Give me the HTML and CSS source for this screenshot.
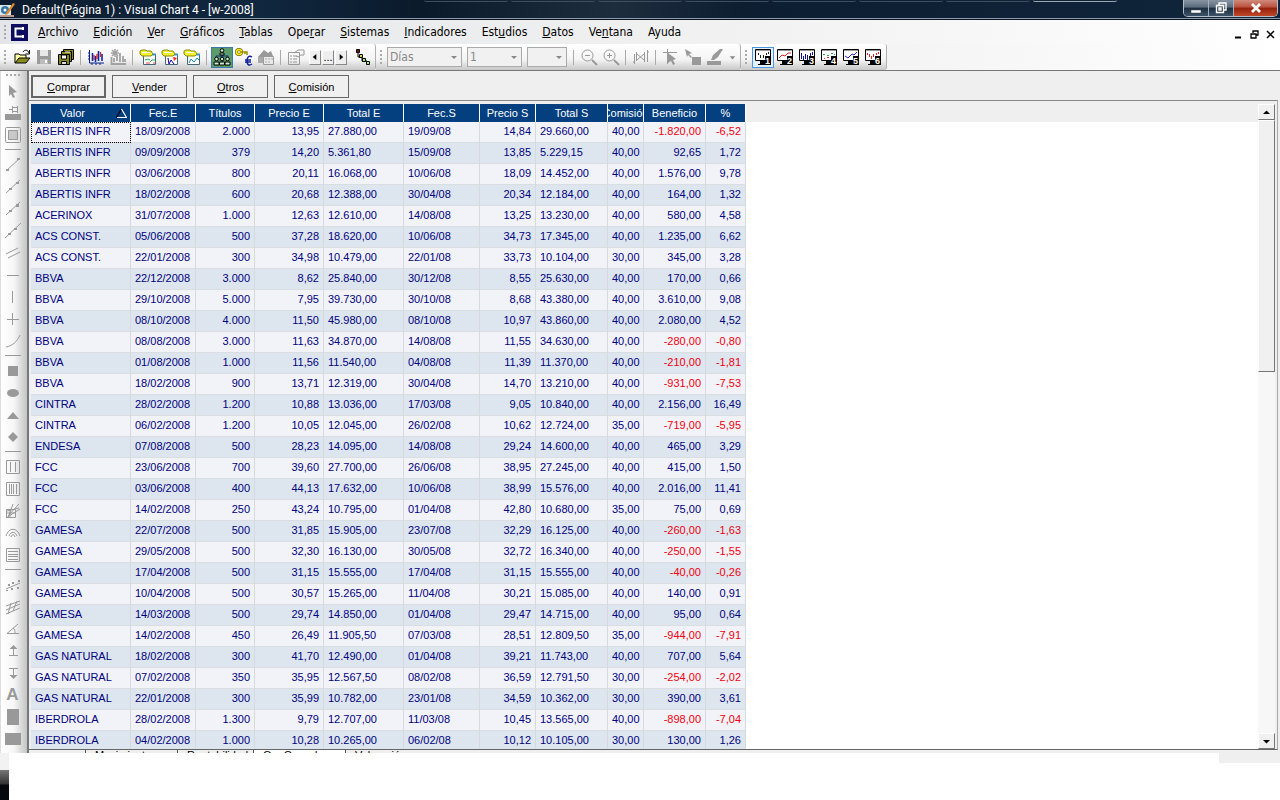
FILE: index.html
```html
<!DOCTYPE html>
<html lang="es">
  <head>
    <meta charset="utf-8" />
    <title>Default(Página 1) : Visual Chart 4 - [w-2008]</title>
    <link rel="stylesheet" href="styles.css">
  </head>

  <body>
    <!-- iconos compartidos -->
    <svg class="defs" aria-hidden="true">
      <symbol id="monitor" viewBox="0 0 18 18">
        <path d="M1.500 1.500h15v11h-15z" fill="#fff" stroke="#000"/>
        <path d="M2 2.500h14" stroke="#999"/>
        <path d="M6 13h5v2h1v2H4v-1h2z" fill="#000"/>
        <path d="M11 8h6v9h-6z" fill="#000"/>
      </symbol>
      <symbol id="folder" viewBox="0 0 18 18">
        <path d="M4.500 6.500h12v10h-12z" fill="#fff" stroke="#467" />
        <path d="M5 6.500h12" stroke="#39c" stroke-width="2"/>
        <path d="M1 3l2-1h4l1 1h4l2 3-2 2H3L1 6z" fill="#f4f02c" stroke="#8a8a10"/>
        <path d="M3 4.500h8" stroke="#fff"/>
      </symbol>
    </svg>

    <div class="window">
      <!-- barra de título -->
      <header class="titlebar">
        <div class="back-tabs"><i></i><i></i><i></i><i></i><i></i><i></i><i></i><i class="lit"></i></div>
        <svg class="app-icon" width="16" height="16" viewBox="0 0 16 16"><path d="M0 3h11v10H0z" fill="#dde8ee"/><circle cx="5" cy="8" r="4" fill="#3478a8"/><circle cx="5" cy="8" r="1.5" fill="#fff"/><path d="M6 11l7-10 2 1-7 10-3 1z" fill="#e08a28"/><path d="M0 14h14" stroke="#b98" stroke-width="2"/></svg>
        <h1>Default(Página 1) : Visual Chart 4 - [w-2008]</h1>
        <div class="win-buttons">
          <button aria-label="Minimizar"><svg width="12" height="12" viewBox="0 0 12 12"><path d="M1 8h10v3H1z" fill="#fff" stroke="#444" stroke-width=".5"/></svg></button>
          <button aria-label="Restaurar"><svg width="12" height="12" viewBox="0 0 12 12" fill="none" stroke="#fff" stroke-width="1.4"><path d="M4 3V1h7v7H9M1.500 3.500h7v7h-7zM4 6h2v2H4z"/></svg></button>
          <button class="close" aria-label="Cerrar"><svg width="12" height="12" viewBox="0 0 12 12"><path d="M2 2l8 8M10 2l-8 8" stroke="#fff" stroke-width="2.800"/></svg></button>
        </div>
      </header>

      <!-- menú -->
      <nav class="menubar">
        <span class="grip"></span>
        <svg class="doc-icon" width="17" height="17" viewBox="0 0 17 17"><path d="M0 0h17v17H0z" fill="#0c0c60"/><path d="M13 4.500H4.500v8H13" fill="none" stroke="#fff" stroke-width="2"/><path d="M12 3v3M12 11v3" stroke="#fff" stroke-width="2"/></svg>
        <a href="#"><u>A</u>rchivo</a>
        <a href="#"><u>E</u>dición</a>
        <a href="#"><u>V</u>er</a>
        <a href="#"><u>G</u>ráficos</a>
        <a href="#"><u>T</u>ablas</a>
        <a href="#">Ope<u>r</u>ar</a>
        <a href="#"><u>S</u>istemas</a>
        <a href="#"><u>I</u>ndicadores</a>
        <a href="#">Est<u>u</u>dios</a>
        <a href="#"><u>D</u>atos</a>
        <a href="#">Ve<u>n</u>tana</a>
        <a href="#">Ayuda</a>
        <div class="doc-buttons">
          <button aria-label="Minimizar ventana"><svg width="9" height="9" viewBox="0 0 9 9"><path d="M1 7.500h6" stroke="#000" stroke-width="2"/></svg></button>
          <button aria-label="Restaurar ventana"><svg width="9" height="9" viewBox="0 0 9 9"><path d="M3 3V1h5v4H6M1 4h5v4H1zM3 1h5M1 4h5" fill="none" stroke="#000" stroke-width="1.300"/></svg></button>
          <button aria-label="Cerrar ventana"><svg width="9" height="9" viewBox="0 0 9 9"><path d="M1 1l7 7M8 1L1 8" stroke="#000" stroke-width="1.500"/></svg></button>
        </div>
      </nav>

      <!-- barras de herramientas -->
      <div class="toolbars">
        <div class="toolbar">
          <span class="grip"></span>
          <button aria-label="Abrir"><svg viewBox="0 0 18 18"><path d="M2 15V6h4l1 1h6v3" fill="#ffffa0" stroke="#000"/><path d="M2 15l4-5h11l-4 5z" fill="#8a8a20" stroke="#000"/><path d="M10 4c2-3 5-2 6 1M16.500 2v4h-4" fill="none" stroke="#000"/></svg></button>
          <button aria-label="Guardar"><svg viewBox="0 0 18 18"><path d="M2 2h14v14H2z" fill="#9a9a9a"/><path d="M5 2h8v6H5z" fill="#e8e8e8"/><path d="M5 11h8v5H5z" fill="#bbb"/><path d="M10 12h2v3h-2z" fill="#fff"/></svg></button>
          <button aria-label="Guardar todo"><svg viewBox="0 0 18 18" stroke="#000"><path d="M6.500 1.500h10v10h-10z" fill="#8a8a20"/><path d="M4.500 3.500h10v10h-10z" fill="#8a8a20"/><path d="M8 4h5" stroke="#fff"/><path d="M1.500 6.500h11v10h-11z" fill="#8a8a20"/><path d="M4.500 7h5v4h-5z" fill="#fff"/><path d="M4.500 13.500h5v3h-5z" fill="#ddd"/></svg></button>
          <span class="sep"></span>
          <button aria-label="Gráfico"><svg viewBox="0 0 18 18" fill="none"><path d="M2.500 2v13H17M1 5h2M1 8h2M1 11h2M5 15v2M9 15v2M13 15v2" stroke="#002090"/><path d="M5.500 5v8M8.500 8v6M11.500 3v10M15 6v7" stroke="#0828b0" stroke-width="1.600"/><path d="M7 7v5M10 6v5M13.500 4v5" stroke="#d03030" stroke-width="1.400"/></svg></button>
          <button aria-label="Quitar gráfico"><svg viewBox="0 0 18 18" fill="none" stroke="#a2a2a2"><path d="M2.500 9v7H17M8 13V8M11 14V5M14 14V8M16 14v-3M5 14v-4" stroke-width="1.800"/><path d="M3 2l6 6M9 2L3 8M6 1v8M2 5h8" stroke-width="1.500"/></svg></button>
          <span class="sep"></span>
          <button aria-label="Abrir tabla"><svg viewBox="0 0 18 18"><use href="#folder"/><path d="M6 12l3-1 2 1" stroke="#2a4" fill="none"/><path d="M11 14l2-2h3" stroke="#2a4" fill="none"/><path d="M7 15h4M14 15h2" stroke="#e44"/></svg></button>
          <button aria-label="Abrir cursor"><svg viewBox="0 0 18 18"><use href="#folder"/><path d="M7 10l1 6 2-4 3 4" stroke="#109" fill="none"/><path d="M12 9l4 1-3 3z" fill="#e22"/></svg></button>
          <button aria-label="Abrir gráfico"><svg viewBox="0 0 18 18"><use href="#folder"/><path d="M6 15l2-4 3 3 3-4 2 2" stroke="#18c" fill="none"/></svg></button>
          <span class="sep"></span>
          <button class="pressed" aria-label="Cartera"><svg viewBox="0 0 18 18" fill="#cdeccc" stroke="#000"><path d="M9 6v8M3 10V8h12v2" fill="none" stroke="#0a2a80"/><circle cx="9" cy="2.500" r="1.800"/><path d="M7 7V5h4v2z"/><circle cx="3.500" cy="11" r="1.800"/><circle cx="9" cy="11" r="1.800"/><circle cx="14.500" cy="11" r="1.800"/><path d="M1 17v-3h5v3zM6.500 17v-3h5v3zM12 17v-3h5v3z"/></svg></button>
          <button aria-label="Clave euro"><svg viewBox="0 0 18 18"><circle cx="4" cy="4" r="2.500" fill="none" stroke="#776a00" stroke-width="3"/><circle cx="4" cy="4" r="2.500" fill="none" stroke="#f4ea20" stroke-width="1.500"/><path d="M6 4h6v3M10 4v2" fill="none" stroke="#a09000" stroke-width="1.600"/><path d="M17 9c-3-2-5 0-5 4s2 5 5 3M10 12h6M10 14h6" fill="none" stroke="#102098" stroke-width="1.500"/></svg></button>
          <button aria-label="Inicio"><svg viewBox="0 0 18 18"><path d="M1 9l6-7 4 3 3-2 2 5v1z" fill="#999"/><path d="M1 9h6v6H1z" fill="#aaa"/><path d="M6.500 8.500h10v8h-10z" fill="#e9e9e9" stroke="#999"/><path d="M8 11h2M11 11h2M14 11h2M8 14h2M11 14h2" stroke="#aaa"/></svg></button>
          <span class="sep"></span>
          <button aria-label="Propiedades"><svg viewBox="0 0 18 18" fill="none" stroke="#999"><path d="M1.500 4.500h11v12h-11z"/><path d="M3 8h2M6 8h4M3 11h2M6 11h4M3 14h2M6 14h4M7 5l4-3h6v5h-3l-3 2-2-1"/></svg></button>
          <div class="stepper">
            <button aria-label="Anterior"><svg viewBox="0 0 9 9"><path d="M6 1v7L2 4.500z"/></svg></button>
            <button>...</button>
            <button aria-label="Siguiente"><svg viewBox="0 0 9 9"><path d="M3 1v7l4-3.500z"/></svg></button>
          </div>
          <button aria-label="Nodos"><svg viewBox="0 0 18 18" stroke="#000"><path d="M5 4v5h4v4h5" fill="none"/><path d="M3.500 1.500h3v3h-3z" fill="#801010"/><path d="M6.500 6.500h3v3h-3z" fill="#dd2"/><path d="M9.500 10.500h3v3h-3z" fill="#9e7"/><path d="M13.500 13.500h3v3h-3z" fill="#9e7"/></svg></button>
        </div>

        <div class="toolbar">
          <span class="grip"></span>
          <label class="combo period"><select aria-label="Periodo" disabled><option>Días</option></select></label>
          <label class="combo amount"><select aria-label="Compresión" disabled><option>1</option></select></label>
          <label class="combo extra"><select aria-label="Plantilla" disabled><option></option></select></label>
          <span class="sep"></span>
          <button aria-label="Alejar"><svg viewBox="0 0 18 18" fill="none" stroke="#999"><circle cx="7.500" cy="7.500" r="5.500"/><path d="M5 7.500h5"/><path d="M12 12l5 5" stroke-width="2"/></svg></button>
          <button aria-label="Acercar"><svg viewBox="0 0 18 18" fill="none" stroke="#999"><circle cx="7.500" cy="7.500" r="5.500"/><path d="M5 7.500h5M7.500 5v5"/><path d="M12 12l5 5" stroke-width="2"/></svg></button>
          <span class="sep"></span>
          <button aria-label="Barras"><svg viewBox="0 0 18 18" fill="none" stroke="#999"><path d="M2.500 6v10M1 14h2M4.500 4v9M5 12l7-6M5 6l7 6M12.500 4v10M15.500 2v12M15 4h2"/></svg></button>
          <span class="sep"></span>
          <button aria-label="Cursor"><svg viewBox="0 0 18 18"><path d="M1 4.500h14M5.500 1v15" stroke="#999"/><path d="M6 5l8 6-3 1 2 4-2 1-2-4-3 2z" fill="#999"/></svg></button>
          <button aria-label="Mover"><svg viewBox="0 0 18 18" fill="#999"><path d="M1 1l7 4-3 1 3 3-1 1-3-3-1 2zM8 9h9v8H8z"/></svg></button>
          <button aria-label="Color de línea"><svg viewBox="0 0 18 18" fill="#999"><path d="M1 13h14v4H1zM5 12l2-5 7-6h3l-5 8-4 3z"/></svg></button>
          <button class="caret" aria-label="Más colores"><svg viewBox="0 0 9 9"><path d="M1 3h7L4.500 7z" fill="#888"/></svg></button>
        </div>

        <div class="toolbar">
          <span class="grip"></span>
          <button class="checked" aria-label="Página 1"><svg viewBox="0 0 18 18"><use href="#monitor"/><path d="M4.500 5v2M6.500 7v3M9.500 7v3M12.500 5v2M14.500 4v2" stroke="#222"/><text x="11" y="16">1</text></svg></button>
          <button aria-label="Página 2"><svg viewBox="0 0 18 18"><use href="#monitor"/><path d="M3 10l3-3 3 1 3-3h3" stroke="#d22" fill="none"/><text x="11" y="16">2</text></svg></button>
          <button aria-label="Página 3"><svg viewBox="0 0 18 18"><use href="#monitor"/><path d="M3.500 5v6M5.500 8v4M7.500 6v5M9.500 7v5M12.500 5v3M14.500 4v3" stroke="#118"/><text x="11" y="16">3</text></svg></button>
          <button aria-label="Página 4"><svg viewBox="0 0 18 18"><use href="#monitor"/><path d="M3 6.500h2M7 7.500h2M11 5.500h2M14 6.500h1" stroke="#2a4"/><path d="M4 10.500h1M7 9.500h2" stroke="#d22"/><text x="11" y="16">4</text></svg></button>
          <button aria-label="Página 5"><svg viewBox="0 0 18 18"><use href="#monitor"/><path d="M3 8l3 2 4-4 2 1 3-3" stroke="#22c" fill="none"/><text x="11" y="16">5</text></svg></button>
          <button aria-label="Página 6"><svg viewBox="0 0 18 18"><use href="#monitor"/><path d="M3.500 5v2M5.500 6v3M7.500 8v3M9.500 6v3M12.500 5v2M14.500 4v2" stroke="#d22"/><text x="11" y="16">6</text></svg></button>
        </div>
      </div>

      <div class="workspace">
        <!-- herramientas de dibujo -->
        <aside class="tools">
          <span class="grip-h"></span>
          <button aria-label="Seleccionar"><svg viewBox="0 0 16 16"><path class="f" d="M4 2l8 7-4 1 2 4-2 1-2-4-2 2z"/></svg></button>
          <button aria-label="Fijar"><svg viewBox="0 0 16 16"><path class="f" d="M0 9h16v6H0z"/><path d="M4 4.500h3M7.500 1v7M7.500 2.500h5v4h-5M12.500 1v7"/></svg></button>
          <button aria-label="Trama"><svg viewBox="0 0 16 16"><rect x=".5" y=".5" width="15" height="15" rx="1"/><path class="f" fill-opacity=".5" d="M3 3h10v10H3z"/><path d="M3.500 3.500h9v9h-9z"/></svg></button>
          <hr>
          <button aria-label="Segmento"><svg viewBox="0 0 16 16"><path d="M2 13L14 2"/><path class="f" d="M1 12h3v2H1zM12 1h3v2h-3z"/></svg></button>
          <button aria-label="Semirrecta"><svg viewBox="0 0 16 16"><path d="M1 14L15 1"/><path class="f" d="M4 9h3v2H4zM11 3h3v2h-3z"/></svg></button>
          <button aria-label="Recta"><svg viewBox="0 0 16 16"><path d="M1 14L15 1"/><path class="f" d="M4 9h3v2H4zM11 3h3v3h-3z"/></svg></button>
          <button aria-label="Recta extendida"><svg viewBox="0 0 16 16"><path d="M0 15L16 0"/><path class="f" d="M3 10h3v2H3zM9 5h3v2H9z"/></svg></button>
          <button aria-label="Paralelas"><svg viewBox="0 0 16 16"><path d="M1 9l12-6M3 13l12-6"/></svg></button>
          <button aria-label="Horizontal"><svg viewBox="0 0 16 16"><path d="M2 8.500h12"/></svg></button>
          <button aria-label="Vertical"><svg viewBox="0 0 16 16"><path d="M7.500 2v12"/></svg></button>
          <button aria-label="Cruz"><svg viewBox="0 0 16 16"><path d="M2 8.500h12M7.500 2v12"/></svg></button>
          <button aria-label="Curva"><svg viewBox="0 0 16 16"><path d="M1 14C7 13 12 9 15 2"/></svg></button>
          <hr>
          <button aria-label="Rectángulo"><svg viewBox="0 0 16 16"><path class="f" d="M3 3h10v10H3z"/></svg></button>
          <button aria-label="Elipse"><svg viewBox="0 0 16 16"><ellipse class="f" cx="8" cy="8" rx="6" ry="4"/></svg></button>
          <button aria-label="Triángulo"><svg viewBox="0 0 16 16"><path class="f" d="M2 12l6-7 6 7z"/></svg></button>
          <button aria-label="Rombo"><svg viewBox="0 0 16 16"><path class="f" d="M8 3l5 5-5 5-5-5z"/></svg></button>
          <hr>
          <button aria-label="Ciclos"><svg viewBox="0 0 16 16"><path d="M1.500 1.500h13v13h-13zM5.500 3v10M10.500 3v10"/></svg></button>
          <button aria-label="Fibonacci"><svg viewBox="0 0 16 16"><path d="M1.500 1.500h13v13h-13zM4.500 3v10M6.500 3v10M8.500 3v10M11.500 3v10"/></svg></button>
          <button aria-label="Abanico"><svg viewBox="0 0 16 16"><path d="M1.500 6.500h9v8h-9zM1 15L15 6M3 13L14 1M4 12L8 1M1 10h9M2 8l12-3M5 7v7"/></svg></button>
          <button aria-label="Arcos"><svg viewBox="0 0 16 16"><path d="M1 11c3-9 11-9 14 0M4 11c2-5 6-5 8 0M6 12c1-3 3-3 4 0"/></svg></button>
          <button aria-label="Niveles"><svg viewBox="0 0 16 16"><path d="M1.500 1.500h13v13h-13zM3 4.500h10M3 7.500h10M3 9.500h10M3 12.500h10"/></svg></button>
          <hr>
          <button aria-label="Regresión"><svg viewBox="0 0 16 16"><path d="M1 12l14-6"/><path class="f" d="M3 7h2v2H3zM7 5h2v2H7zM13 3h2v2h-2zM1 13h2v1H1zM6 11h2v2H6zM12 10h2v2h-2z"/></svg></button>
          <button aria-label="Canal"><svg viewBox="0 0 16 16"><path d="M1 7l14-5M1 11l14-6M1 15l14-6M3 15L6 4M8 12l4-10"/></svg></button>
          <button aria-label="Ángulo"><svg viewBox="0 0 16 16"><path d="M13 3L2 12.500h12M8 7c2 1 2 3 2 5"/></svg></button>
          <button aria-label="Flecha arriba"><svg viewBox="0 0 16 16"><path class="f" d="M8.500 2l4 4h-8z"/><path d="M8.500 5v7M4 12.500h9"/></svg></button>
          <button aria-label="Flecha abajo"><svg viewBox="0 0 16 16"><path class="f" d="M8.500 14l4-4h-8z"/><path d="M8.500 10V4M4 3.500h9"/></svg></button>
          <button class="letter">A</button>
          <button aria-label="Nota"><svg viewBox="0 0 16 16"><path class="f" d="M2 0h12v16H2z"/></svg></button>
          <button aria-label="Imagen"><svg viewBox="0 0 16 16"><path class="f" d="M0 2h16v12H0z"/></svg></button>
        </aside>

        <main class="document">
          <div class="actions">
            <button class="default"><u>C</u>omprar</button>
            <button><u>V</u>ender</button>
            <button><u>O</u>tros</button>
            <button><u>C</u>omisión</button>
          </div>

          <div class="sheet">
            <div class="grid">
              <table>
                <colgroup>
                  <col class="c-valor"><col class="c-fece"><col class="c-titulos"><col class="c-precioe"><col class="c-totale"><col class="c-fecs"><col class="c-precios"><col class="c-totals"><col class="c-comision"><col class="c-beneficio"><col class="c-pct">
                </colgroup>
                <thead>
                  <tr>
                    <th class="sorted">Valor<svg width="11" height="10" viewBox="0 0 11 10"><path d="M.5 9.500L5.500 1" stroke="#001030" stroke-width="1.500"/><path d="M5.500 1l5 8.500H1" fill="none" stroke="#fff" stroke-width="1.200"/></svg></th>
                    <th>Fec.E</th><th>Títulos</th><th>Precio E</th><th>Total E</th><th>Fec.S</th><th>Precio S</th><th>Total S</th>
                    <th><span class="clip">Comisión</span></th>
                    <th>Beneficio</th><th>%</th>
                  </tr>
                </thead>
                <tbody>
                  <tr><td class="current">ABERTIS INFR</td><td>18/09/2008</td><td>2.000</td><td>13,95</td><td>27.880,00</td><td>19/09/08</td><td>14,84</td><td>29.660,00</td><td>40,00</td><td class="neg">-1.820,00</td><td class="neg">-6,52</td></tr>
                  <tr><td>ABERTIS INFR</td><td>09/09/2008</td><td>379</td><td>14,20</td><td>5.361,80</td><td>15/09/08</td><td>13,85</td><td>5.229,15</td><td>40,00</td><td>92,65</td><td>1,72</td></tr>
                  <tr><td>ABERTIS INFR</td><td>03/06/2008</td><td>800</td><td>20,11</td><td>16.068,00</td><td>10/06/08</td><td>18,09</td><td>14.452,00</td><td>40,00</td><td>1.576,00</td><td>9,78</td></tr>
                  <tr><td>ABERTIS INFR</td><td>18/02/2008</td><td>600</td><td>20,68</td><td>12.388,00</td><td>30/04/08</td><td>20,34</td><td>12.184,00</td><td>40,00</td><td>164,00</td><td>1,32</td></tr>
                  <tr><td>ACERINOX</td><td>31/07/2008</td><td>1.000</td><td>12,63</td><td>12.610,00</td><td>14/08/08</td><td>13,25</td><td>13.230,00</td><td>40,00</td><td>580,00</td><td>4,58</td></tr>
                  <tr><td>ACS CONST.</td><td>05/06/2008</td><td>500</td><td>37,28</td><td>18.620,00</td><td>10/06/08</td><td>34,73</td><td>17.345,00</td><td>40,00</td><td>1.235,00</td><td>6,62</td></tr>
                  <tr><td>ACS CONST.</td><td>22/01/2008</td><td>300</td><td>34,98</td><td>10.479,00</td><td>22/01/08</td><td>33,73</td><td>10.104,00</td><td>30,00</td><td>345,00</td><td>3,28</td></tr>
                  <tr><td>BBVA</td><td>22/12/2008</td><td>3.000</td><td>8,62</td><td>25.840,00</td><td>30/12/08</td><td>8,55</td><td>25.630,00</td><td>40,00</td><td>170,00</td><td>0,66</td></tr>
                  <tr><td>BBVA</td><td>29/10/2008</td><td>5.000</td><td>7,95</td><td>39.730,00</td><td>30/10/08</td><td>8,68</td><td>43.380,00</td><td>40,00</td><td>3.610,00</td><td>9,08</td></tr>
                  <tr><td>BBVA</td><td>08/10/2008</td><td>4.000</td><td>11,50</td><td>45.980,00</td><td>08/10/08</td><td>10,97</td><td>43.860,00</td><td>40,00</td><td>2.080,00</td><td>4,52</td></tr>
                  <tr><td>BBVA</td><td>08/08/2008</td><td>3.000</td><td>11,63</td><td>34.870,00</td><td>14/08/08</td><td>11,55</td><td>34.630,00</td><td>40,00</td><td class="neg">-280,00</td><td class="neg">-0,80</td></tr>
                  <tr><td>BBVA</td><td>01/08/2008</td><td>1.000</td><td>11,56</td><td>11.540,00</td><td>04/08/08</td><td>11,39</td><td>11.370,00</td><td>40,00</td><td class="neg">-210,00</td><td class="neg">-1,81</td></tr>
                  <tr><td>BBVA</td><td>18/02/2008</td><td>900</td><td>13,71</td><td>12.319,00</td><td>30/04/08</td><td>14,70</td><td>13.210,00</td><td>40,00</td><td class="neg">-931,00</td><td class="neg">-7,53</td></tr>
                  <tr><td>CINTRA</td><td>28/02/2008</td><td>1.200</td><td>10,88</td><td>13.036,00</td><td>17/03/08</td><td>9,05</td><td>10.840,00</td><td>40,00</td><td>2.156,00</td><td>16,49</td></tr>
                  <tr><td>CINTRA</td><td>06/02/2008</td><td>1.200</td><td>10,05</td><td>12.045,00</td><td>26/02/08</td><td>10,62</td><td>12.724,00</td><td>35,00</td><td class="neg">-719,00</td><td class="neg">-5,95</td></tr>
                  <tr><td>ENDESA</td><td>07/08/2008</td><td>500</td><td>28,23</td><td>14.095,00</td><td>14/08/08</td><td>29,24</td><td>14.600,00</td><td>40,00</td><td>465,00</td><td>3,29</td></tr>
                  <tr><td>FCC</td><td>23/06/2008</td><td>700</td><td>39,60</td><td>27.700,00</td><td>26/06/08</td><td>38,95</td><td>27.245,00</td><td>40,00</td><td>415,00</td><td>1,50</td></tr>
                  <tr><td>FCC</td><td>03/06/2008</td><td>400</td><td>44,13</td><td>17.632,00</td><td>10/06/08</td><td>38,99</td><td>15.576,00</td><td>40,00</td><td>2.016,00</td><td>11,41</td></tr>
                  <tr><td>FCC</td><td>14/02/2008</td><td>250</td><td>43,24</td><td>10.795,00</td><td>01/04/08</td><td>42,80</td><td>10.680,00</td><td>35,00</td><td>75,00</td><td>0,69</td></tr>
                  <tr><td>GAMESA</td><td>22/07/2008</td><td>500</td><td>31,85</td><td>15.905,00</td><td>23/07/08</td><td>32,29</td><td>16.125,00</td><td>40,00</td><td class="neg">-260,00</td><td class="neg">-1,63</td></tr>
                  <tr><td>GAMESA</td><td>29/05/2008</td><td>500</td><td>32,30</td><td>16.130,00</td><td>30/05/08</td><td>32,72</td><td>16.340,00</td><td>40,00</td><td class="neg">-250,00</td><td class="neg">-1,55</td></tr>
                  <tr><td>GAMESA</td><td>17/04/2008</td><td>500</td><td>31,15</td><td>15.555,00</td><td>17/04/08</td><td>31,15</td><td>15.555,00</td><td>40,00</td><td class="neg">-40,00</td><td class="neg">-0,26</td></tr>
                  <tr><td>GAMESA</td><td>10/04/2008</td><td>500</td><td>30,57</td><td>15.265,00</td><td>11/04/08</td><td>30,21</td><td>15.085,00</td><td>40,00</td><td>140,00</td><td>0,91</td></tr>
                  <tr><td>GAMESA</td><td>14/03/2008</td><td>500</td><td>29,74</td><td>14.850,00</td><td>01/04/08</td><td>29,47</td><td>14.715,00</td><td>40,00</td><td>95,00</td><td>0,64</td></tr>
                  <tr><td>GAMESA</td><td>14/02/2008</td><td>450</td><td>26,49</td><td>11.905,50</td><td>07/03/08</td><td>28,51</td><td>12.809,50</td><td>35,00</td><td class="neg">-944,00</td><td class="neg">-7,91</td></tr>
                  <tr><td>GAS NATURAL</td><td>18/02/2008</td><td>300</td><td>41,70</td><td>12.490,00</td><td>01/04/08</td><td>39,21</td><td>11.743,00</td><td>40,00</td><td>707,00</td><td>5,64</td></tr>
                  <tr><td>GAS NATURAL</td><td>07/02/2008</td><td>350</td><td>35,95</td><td>12.567,50</td><td>08/02/08</td><td>36,59</td><td>12.791,50</td><td>30,00</td><td class="neg">-254,00</td><td class="neg">-2,02</td></tr>
                  <tr><td>GAS NATURAL</td><td>22/01/2008</td><td>300</td><td>35,99</td><td>10.782,00</td><td>23/01/08</td><td>34,59</td><td>10.362,00</td><td>30,00</td><td>390,00</td><td>3,61</td></tr>
                  <tr><td>IBERDROLA</td><td>28/02/2008</td><td>1.300</td><td>9,79</td><td>12.707,00</td><td>11/03/08</td><td>10,45</td><td>13.565,00</td><td>40,00</td><td class="neg">-898,00</td><td class="neg">-7,04</td></tr>
                  <tr><td>IBERDROLA</td><td>04/02/2008</td><td>1.000</td><td>10,28</td><td>10.265,00</td><td>06/02/08</td><td>10,12</td><td>10.105,00</td><td>30,00</td><td>130,00</td><td>1,26</td></tr>
                </tbody>
              </table>
            </div>
            <div class="scrollbar">
              <button aria-label="Subir"><svg viewBox="0 0 9 9"><path d="M1 6h7L4.500 2.500z"/></svg></button>
              <div class="thumb"></div>
              <button class="down" aria-label="Bajar"><svg viewBox="0 0 9 9"><path d="M1 3h7L4.500 6.500z"/></svg></button>
            </div>
          </div>

          <!-- pestañas de la cartera -->
          <div class="tabs">
            <a href="#" class="wide">Movimientos</a>
            <a href="#">Rentabilidad</a>
            <a href="#" class="wide active">Op. Cerradas</a>
            <a href="#">Valoración</a>
          </div>
        </main>
      </div>

      <footer class="bottom">
        <div class="corner"></div>
        <div class="status"></div>
      </footer>
    </div>
  </body>
</html>
```

FILE: styles.css
```css
* {
  box-sizing: border-box;
}

body {
  margin: 0;
  background: #fff;
  color: #000;
  font-family: "Liberation Sans", Arial, sans-serif;
  font-size: 11px;
}

button {
  margin: 0;
  padding: 0;
  border: 0;
  background: none;
  color: inherit;
  font: inherit;
}

a {
  color: inherit;
  text-decoration: none;
}

svg {
  display: block;
  flex: none;
}

.defs {
  position: absolute;
  width: 0;
  height: 0;
}

.window {
  display: flex;
  flex-direction: column;
  height: 100vh;
  overflow: hidden;
}

/* barra de título */
.titlebar {
  position: relative;
  display: flex;
  align-items: center;
  flex: none;
  height: 20px;
  gap: 6px;
  border-bottom: 1px solid #0a1420;
  box-shadow: inset 0 -1px #8c99a6;
  background: linear-gradient(90deg, #0d1c2e, #10273f 20%, #0b1a2b 33%, #1d2d3e 48%, #0d1e31 58%, #10253b);
  color: #fff;
}

.titlebar h1 {
  flex: 1;
  margin: 0;
  font: 12px/18px Roboto, "Open Sans", sans-serif;
}

.back-tabs {
  position: absolute;
  top: 0;
  left: 424px;
  display: flex;
  gap: 3px;
}

.back-tabs i {
  width: 84px;
  height: 2px;
  border-bottom: 1px solid #3c4f60;
  border-radius: 0 0 3px 3px;
}

.back-tabs .lit {
  border-color: #9aa6b0;
}

.win-buttons {
  display: flex;
  align-self: flex-start;
  height: 17px;
  margin-right: 2px;
  border: 1px solid #b4bec8;
  border-top: 0;
  border-radius: 0 0 5px 5px;
  overflow: hidden;
}

.win-buttons button {
  display: flex;
  align-items: center;
  justify-content: center;
  width: 25px;
  border-right: 1px solid #a5b0ba;
  background: linear-gradient(#8895a2, #5a6b7c 45%, #1c2e40 50%, #3c5268);
}

.win-buttons .close {
  width: 43px;
  border-right: 0;
  background: linear-gradient(#d08a7c, #b8503c 45%, #94200c 50%, #c04828);
}

/* menú */
.menubar {
  display: flex;
  align-items: center;
  flex: none;
  height: 24px;
  gap: 15px;
  padding: 0 5px 0 4px;
  background: linear-gradient(90deg, #e3e5e8, #f2f2f2 60%, #fff);
  font: 12px/16px "DejaVu Sans Condensed", "DejaVu Sans", sans-serif;
}

.grip {
  flex: none;
  width: 2px;
  height: 14px;
  background: repeating-linear-gradient(#aaa 0 2px, transparent 2px 4px);
}

.doc-icon {
  margin: 0 -5px 0 -10px;
}

.doc-buttons {
  display: flex;
  gap: 7px;
  margin-left: auto;
  padding-top: 5px;
}

/* barras de herramientas */
.toolbars {
  display: flex;
  flex: none;
  height: 27px;
  border-bottom: 1px solid #777;
  background: linear-gradient(90deg, #ececec, #f4f4f4 70%, #fff);
}

.toolbar {
  display: flex;
  align-items: center;
  height: 26px;
  padding: 0 2px 0 4px;
  border-right: 1px solid #b0b0b0;
  border-radius: 0 3px 3px 0;
  background: linear-gradient(#fff, #f4f4f4 60%, #c8c8c8);
}

.toolbar .grip {
  margin-right: 5px;
}

.toolbar button {
  display: flex;
  align-items: center;
  justify-content: center;
  flex: none;
  width: 22px;
  height: 21px;
}

.toolbar svg {
  width: 18px;
  height: 18px;
}

.toolbar text {
  fill: #fff;
  font: bold 9px "Liberation Sans", sans-serif;
}

.toolbar .pressed {
  border: 1px solid #3a78b0;
  background: #5c9c68;
}

.toolbar .checked {
  border: 1px solid #4a94e0;
  background: #e6f0fa;
}

.toolbar .caret {
  width: 12px;
}

.toolbar .caret svg {
  width: 7px;
  height: 7px;
}

.sep {
  flex: none;
  width: 1px;
  height: 15px;
  margin: 0 4px 0 3px;
  background: #aaa;
}

.toolbar .stepper {
  display: flex;
  gap: 1px;
  margin: 0 4px 0 2px;
}

.toolbar .stepper button {
  width: 12px;
  height: 15px;
  border: 1px solid;
  border-color: #fff #888 #888 #fff;
  background: #efefef;
}

.toolbar .stepper svg {
  width: 8px;
  height: 8px;
}

.combo {
  position: relative;
  margin-right: 5px;
}

.combo::after {
  content: "";
  position: absolute;
  top: 9px;
  right: 5px;
  border: 3px solid transparent;
  border-top-color: #888;
}

.combo select {
  display: block;
  width: 100%;
  height: 20px;
  padding: 0 2px;
  border: 1px solid #aaa;
  border-radius: 0;
  background: #f1f1f1;
  color: #888;
  font: 12px/16px "DejaVu Sans Condensed", "DejaVu Sans", sans-serif;
  opacity: 1;
  appearance: none;
}

.period {
  width: 75px;
}

.amount {
  width: 55px;
}

.extra {
  width: 40px;
  margin-right: 3px;
}

/* zona de trabajo */
.workspace {
  display: flex;
  flex: 1;
  min-height: 0;
}

.tools {
  display: flex;
  flex-direction: column;
  align-items: center;
  flex: none;
  width: 29px;
  padding: 3px 3px 0 0;
  border-left: 1px solid #ddd;
  border-right: 2px solid #777;
  overflow: hidden;
  background: linear-gradient(90deg, #fff, #f6f6f6 50%, #c4c4c4);
}

.grip-h {
  flex: none;
  width: 14px;
  height: 2px;
  margin-bottom: 4px;
  background: repeating-linear-gradient(90deg, #aaa 0 2px, transparent 2px 4px);
}

.tools button {
  display: flex;
  align-items: center;
  justify-content: center;
  flex: none;
  height: 22px;
}

.tools svg {
  width: 16px;
  height: 16px;
  fill: none;
  stroke: #999;
}

.tools .f {
  fill: #999;
  stroke: none;
}

.tools .letter {
  color: #999;
  font-size: 17px;
  font-weight: bold;
}

.tools hr {
  flex: none;
  width: 16px;
  height: 1px;
  margin: 3px 0 4px;
  border: 0;
  background: #999;
}

.document {
  display: flex;
  flex-direction: column;
  flex: 1;
  min-width: 0;
  padding-right: 2px;
  background: #efefef;
}

.actions {
  display: flex;
  flex: none;
  gap: 6px;
  padding: 4px 2px 2px;
}

.actions button {
  width: 75px;
  height: 23px;
  border: 1px solid #666;
  background: #f0f0f0;
}

.actions .default {
  border-width: 2px;
}

.sheet {
  display: flex;
  flex: 1;
  min-height: 0;
  border-top: 1px solid #888;
  border-right: 1px solid #aaa;
  border-bottom: 1px solid #666;
  padding: 3px 2px 0;
}

.grid {
  flex: 1;
  overflow: hidden;
  background: linear-gradient(#efefef 18px, #fff 18px);
}

table {
  width: 715px;
  table-layout: fixed;
  border-collapse: separate;
  border-spacing: 0;
}

.c-valor { width: 100px; }
.c-fece { width: 65px; }
.c-titulos { width: 59px; }
.c-precioe { width: 69px; }
.c-totale { width: 80px; }
.c-fecs { width: 76px; }
.c-precios { width: 56px; }
.c-totals { width: 72px; }
.c-comision { width: 36px; }
.c-beneficio { width: 62px; }
.c-pct { width: 40px; }

th {
  height: 18px;
  padding: 0;
  border-right: 1px solid #fff;
  background: #043f7f;
  color: #fff;
  font-weight: normal;
}

.sorted {
  position: relative;
  padding-right: 16px;
}

.sorted svg {
  position: absolute;
  top: 4px;
  right: 3px;
}

.clip {
  display: flex;
  justify-content: center;
  overflow: hidden;
}

td {
  height: 21px;
  padding: 0 4px 2px;
  border-right: 1px solid #d6dade;
  border-bottom: 1px solid #dadde2;
  background: #f2f3f8;
  color: #000080;
  line-height: 18px;
  text-align: right;
  white-space: nowrap;
}

tr:nth-child(even) td {
  background: #dde6ee;
}

/* valor, fechas y totales van a la izquierda */
td:nth-child(1),
td:nth-child(2),
td:nth-child(5),
td:nth-child(6),
td:nth-child(8) {
  text-align: left;
}

td.neg {
  color: #f00010;
}

.current {
  outline: 1px dotted #000;
  outline-offset: -1px;
}

.scrollbar {
  display: flex;
  flex-direction: column;
  flex: none;
  width: 17px;
  background: #f7f7f7;
}

.scrollbar button {
  display: flex;
  align-items: center;
  justify-content: center;
  flex: none;
  height: 16px;
}

.scrollbar button,
.thumb {
  border: 1px solid;
  border-color: #fff #777 #777 #fff;
  background: #f0f0f0;
}

.scrollbar svg {
  width: 9px;
  height: 9px;
}

.thumb {
  height: 39%;
}

.scrollbar .down {
  margin-top: auto;
}

.tabs {
  display: flex;
  flex: none;
  height: 3px;
  padding-left: 56px;
  overflow: hidden;
  font-size: 11px;
  line-height: 10px;
}

.tabs a {
  width: 76px;
  padding: 0 9px;
  border-left: 1px solid #555;
}

.tabs .wide {
  width: 92px;
}

.tabs .active {
  background: #fff;
}

/* pie */
.bottom {
  display: flex;
  justify-content: space-between;
  flex: none;
  height: 47px;
}

.corner {
  width: 9px;
  border-top: 17px solid #f2f2f2;
  background: linear-gradient(#777, #333 14px, #05080c 15px);
}

.status {
  width: 61px;
  height: 10px;
  background: #efefef;
}
```
